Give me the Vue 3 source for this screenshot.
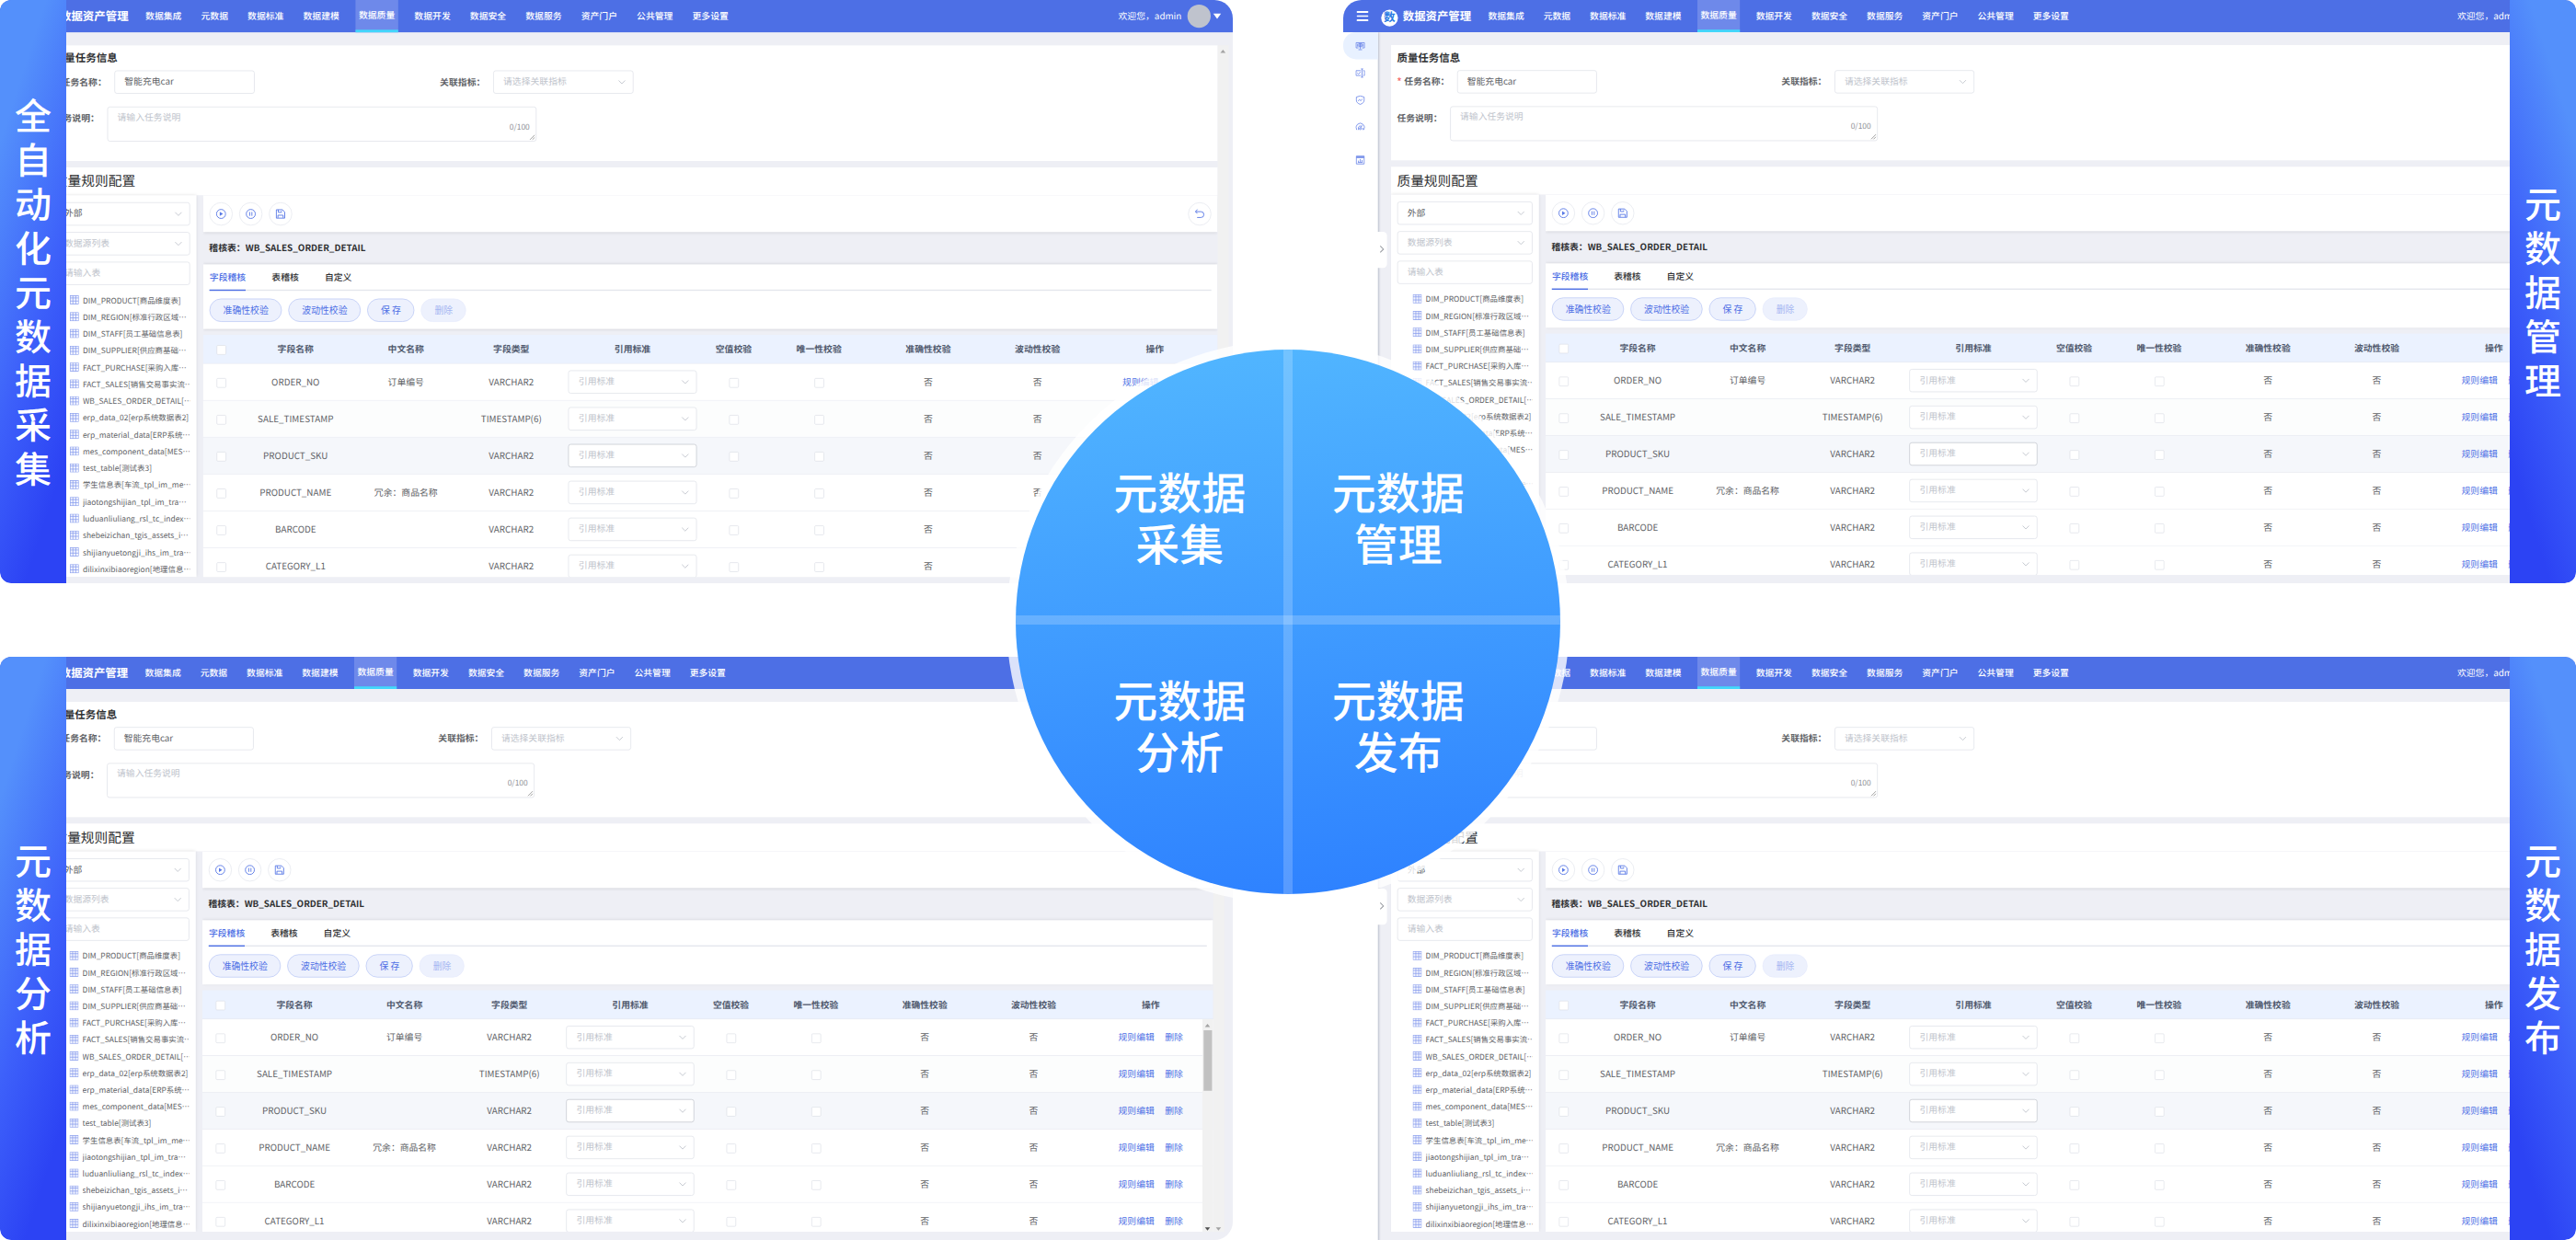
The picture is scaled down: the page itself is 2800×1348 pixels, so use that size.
<script setup>
const panels = [
  { id: 'collect', side: 'left', scale: 0.7026, banner: '全自动化元数据采集' },
  { id: 'manage', side: 'right', scale: 0.7, banner: '元数据管理' },
  { id: 'analyse', side: 'left', scale: 0.7, banner: '元数据分析' },
  { id: 'publish', side: 'right', scale: 0.7, banner: '元数据发布' },
]

const menus = [
  '数据集成', '元数据', '数据标准', '数据建模', '数据质量', '数据开发',
  '数据安全', '数据服务', '资产门户', '公共管理', '更多设置',
]
const activeMenu = '数据质量'

const tables = [
  'DIM_PRODUCT[商品维度表]',
  'DIM_REGION[标准行政区域⋯',
  'DIM_STAFF[员工基础信息表]',
  'DIM_SUPPLIER[供应商基础⋯',
  'FACT_PURCHASE[采购入库⋯',
  'FACT_SALES[销售交易事实流⋯',
  'WB_SALES_ORDER_DETAIL[⋯',
  'erp_data_02[erp系统数据表2]',
  'erp_material_data[ERP系统⋯',
  'mes_component_data[MES⋯',
  'test_table[测试表3]',
  '学生信息表[车流_tpl_im_me⋯',
  'jiaotongshijian_tpl_im_tra⋯',
  'luduanliuliang_rsl_tc_index⋯',
  'shebeizichan_tgis_assets_i⋯',
  'shijianyuetongji_ihs_im_tra⋯',
  'dilixinxibiaoregion[地理信息⋯',
]

const tabs = ['字段稽核', '表稽核', '自定义']
const columns = ['字段名称', '中文名称', '字段类型', '引用标准', '空值校验', '唯一性校验', '准确性校验', '波动性校验', '操作']
const rows = [
  { name: 'ORDER_NO', label: '订单编号', type: 'VARCHAR2' },
  { name: 'SALE_TIMESTAMP', label: '', type: 'TIMESTAMP(6)' },
  { name: 'PRODUCT_SKU', label: '', type: 'VARCHAR2' },
  { name: 'PRODUCT_NAME', label: '冗余：商品名称', type: 'VARCHAR2' },
  { name: 'BARCODE', label: '', type: 'VARCHAR2' },
  { name: 'CATEGORY_L1', label: '', type: 'VARCHAR2' },
]

const quarters = [
  ['元数据', '采集'],
  ['元数据', '管理'],
  ['元数据', '分析'],
  ['元数据', '发布'],
]
</script>

<template>
  <div class="page" lang="zh-CN">
    <section v-for="p in panels" :key="p.id" class="panel" :class="p.side">
      <div class="app" :style="{ transform: `scale(${p.scale})` }">
        <header class="nav">
          <span class="burger"><i></i><i></i><i></i></span>
          <span class="logo">数</span>
          <span class="brand">数据资产管理</span>
          <nav class="menu">
            <a v-for="m in menus" :key="m" :class="{ active: m === activeMenu }">{{ m }}</a>
          </nav>
          <span class="welcome">欢迎您，admin</span>
          <span class="avatar"></span>
          <span class="caret"></span>
        </header>

        <div class="body">
          <aside class="side">
            <div class="side-item on">
              <svg viewBox="0 0 16 16"><path d="M5 11H1V2.500h14V11h-4M5.500 4h5v5h-5zM8 4v9M5 14h6M3.200 4.500V9M12.800 4.500V9M5.500 6.500h5" /></svg>
            </div>
            <div class="side-item">
              <svg viewBox="0 0 16 16"><path d="M9 4H1v8h8M3 7.500l2 2L8.500 6M11 1v14M9 1h4M9 15h4M13 4h2v8h-2" /></svg>
            </div>
            <div class="side-item">
              <svg viewBox="0 0 16 16"><path d="M8 1l6.500 2v5c0 3.500-2.500 5.500-6.500 7-4-1.500-6.500-3.500-6.500-7V3zM4.500 9.500l2-2.500L9 9l2.500-3" /></svg>
            </div>
            <div class="side-item">
              <svg viewBox="0 0 16 16"><path d="M2.200 12.500a7 7 0 1 1 11.600 0M5 12.500V9a3 3 0 0 1 5-2.200M12 9v3.500M8.500 9.500L11 5" /><circle cx="8" cy="10.500" r="1.500" /></svg>
            </div>
            <div class="side-item last">
              <svg viewBox="0 0 16 16"><path d="M1.500 1.500h13v13h-13zM1.500 4.200h13M1.500 2.800h13M5 12V9M8 12V6.500M11 12V8M4 12h8" /></svg>
            </div>
            <div class="fold"><svg viewBox="0 0 10 16"><path d="M2.500 3l5 5-5 5" /></svg></div>
          </aside>

          <main class="main">
            <div class="content">
              <section class="card info">
                <h3>质量任务信息</h3>
                <div class="form-row">
                  <div class="field first">
                    <label><em>*</em>任务名称：</label>
                    <div class="input w217">智能充电car</div>
                  </div>
                  <div class="field">
                    <label>关联指标：</label>
                    <div class="input w217 empty">请选择关联指标
                      <svg class="chev" viewBox="0 0 14 14"><path d="M2 4.500l5 5 5-5" /></svg>
                    </div>
                  </div>
                </div>
                <div class="form-row second">
                  <label>任务说明：</label>
                  <div class="textarea">
                    <span>请输入任务说明</span>
                    <small>0/100</small>
                    <svg class="grip" viewBox="0 0 12 12"><path d="M1 11L11 1M6 11l5-5" /></svg>
                  </div>
                </div>
              </section>

              <section class="config">
                <h2>质量规则配置</h2>
                <div class="split">
                  <div class="tree">
                    <div class="input">外部
                      <svg class="chev" viewBox="0 0 14 14"><path d="M2 4.500l5 5 5-5" /></svg>
                    </div>
                    <div class="input empty">数据源列表
                      <svg class="chev" viewBox="0 0 14 14"><path d="M2 4.500l5 5 5-5" /></svg>
                    </div>
                    <div class="input empty">请输入表</div>
                    <ul>
                      <li v-for="t in tables" :key="t">
                        <svg viewBox="0 0 14 14"><rect x=".5" y=".5" width="13" height="13" /><path d="M.5 4h13M.5 8.800h13M4.800.5v13M9.200.5v13" /></svg>
                        <span>{{ t }}</span>
                      </li>
                    </ul>
                  </div>

                  <div class="work">
                    <div class="tools">
                      <span class="round"><svg viewBox="0 0 16 16"><circle cx="8" cy="8" r="7" /><path class="fill" d="M6 4.800v6.400L11 8z" /></svg></span>
                      <span class="round"><svg viewBox="0 0 16 16"><circle cx="8" cy="8" r="7" /><path d="M6.300 5v6M9.700 5v6" /></svg></span>
                      <span class="round"><svg viewBox="0 0 16 16"><path d="M1.500 1.500h9.500l3.500 3.500v9.500h-13zM4.500 1.500v4h5v-2M4 14v-4h8v4" /></svg></span>
                      <span class="round back"><svg viewBox="0 0 16 16"><path d="M4.500 1L1.500 4.500l3 3M1.500 4.500H10a4.500 4.500 0 0 1 0 9H4" /></svg></span>
                    </div>
                    <div class="strip">稽核表：WB_SALES_ORDER_DETAIL</div>
                    <div class="tabcard">
                      <div class="tabs">
                        <span v-for="(t, i) in tabs" :key="t" :class="{ active: i === 0 }">{{ t }}</span>
                      </div>
                      <div class="buttons">
                        <button>准确性校验</button>
                        <button>波动性校验</button>
                        <button>保 存</button>
                        <button disabled>删除</button>
                      </div>
                    </div>
                    <div class="table">
                      <div class="tr head">
                        <span><i class="check"></i></span>
                        <span v-for="c in columns" :key="c">{{ c }}</span>
                      </div>
                      <div v-for="r in rows" :key="r.name" class="tr" :class="{ hover: r.name === 'PRODUCT_SKU' }">
                        <span><i class="check"></i></span>
                        <span>{{ r.name }}</span>
                        <span>{{ r.label }}</span>
                        <span>{{ r.type }}</span>
                        <span class="pick">
                          <div class="input empty">引用标准
                            <svg class="chev" viewBox="0 0 14 14"><path d="M2 4.500l5 5 5-5" /></svg>
                          </div>
                        </span>
                        <span><i class="check"></i></span>
                        <span><i class="check"></i></span>
                        <span>否</span>
                        <span>否</span>
                        <span class="ops"><a>规则编辑</a><a>删除</a></span>
                      </div>
                      <div class="inner-bar"><i class="up"></i><b></b><i class="down"></i></div>
                    </div>
                  </div>
                </div>
              </section>
            </div>
            <div class="outer-bar"><i class="up"></i><i class="down"></i></div>
          </main>
        </div>
      </div>
      <div class="banner"><span v-for="(ch, i) in p.banner" :key="i">{{ ch }}</span></div>
    </section>

    <div class="halo">
      <div class="disc">
        <div v-for="(q, i) in quarters" :key="i" class="quarter">
          <span v-for="line in q" :key="line">{{ line }}</span>
        </div>
        <i class="bar-h"></i>
        <i class="bar-v"></i>
      </div>
    </div>
  </div>
</template>

<style>
body { background: #fff; }
</style>

<style scoped>
* { box-sizing: border-box; }
.page {
  position: relative;
  width: 2800px;
  height: 1348px;
  overflow: hidden;
  display: grid;
  grid-template-columns: 1340px 1340px;
  grid-template-rows: 634px 634px;
  gap: 80px 120px;
  font-family: "Noto Sans CJK SC", sans-serif;
  text-rendering: geometricPrecision;
  background: #fff;
}
.panel { position: relative; overflow: hidden; }
.panel.left { border-radius: 12px 20px 20px 12px; }
.panel.right { border-radius: 20px 12px 12px 20px; }

.app {
  width: 1920px;
  height: 910px;
  transform-origin: 0 0;
  font-size: 14px;
  line-height: 20px;
  color: #606266;
  background: #eeeff5;
  white-space: nowrap;
}

/* top navigation */
.nav {
  display: flex;
  align-items: center;
  height: 50px;
  color: #fff;
  background: #4d6fe5;
}
.burger {
  display: flex;
  flex-direction: column;
  gap: 4px;
  width: 18px;
  margin-left: 20.5px;
}
.burger i { height: 2.600px; background: #fff; border-radius: 1px; }
.logo {
  width: 26px;
  height: 26px;
  margin: 5px 0 0 20.500px;
  border-radius: 50%;
  background: #fff;
  color: #2b7be4;
  font-size: 18px;
  font-weight: 700;
  line-height: 23px;
  text-align: center;
}
.brand { width: 125px; margin-left: 7.500px; font-size: 17.700px; font-weight: 700; }
.menu { display: flex; height: 50px; }
.menu a {
  height: 50px;
  margin-right: 20px;
  padding: 0 5px;
  line-height: 51px;
  font-weight: 500;
}
.menu a:first-child { margin-left: 2.500px; }
.menu a.active {
  line-height: 47px;
  background: #6e89ea;
  border-bottom: 4px solid #43d7fb;
}
.welcome { width: 107px; margin-left: auto; }
.avatar { width: 36px; height: 36px; border-radius: 50%; background: #bfc3cd; }
.caret {
  margin: 0 31px 0 4px;
  border: 6.500px solid transparent;
  border-top: 8px solid #fff;
  border-bottom: 0;
}

/* left rail */
.body { display: flex; height: 860px; }
.side {
  position: relative;
  z-index: 1;
  width: 53.500px;
  background: #fff;
  box-shadow: 1px 0 5px rgba(0, 21, 61, .6);
  clip-path: inset(0 -20px 0 0);
}
.side-item {
  display: flex;
  align-items: center;
  justify-content: center;
  height: 42px;
}
.side-item.on { background: #e8f1ff; border-radius: 20px 0 0 20px; }
.side-item.last { margin-top: 9px; }
.side-item svg { width: 15px; height: 15px; fill: none; stroke: #6c87e9; stroke-width: 1.300; }
.fold {
  position: absolute;
  top: 310px;
  left: 52px;
  width: 16px;
  height: 56px;
  padding: 19px 0 0 3px;
  background: #fff;
  border-radius: 0 6px 6px 0;
}
.fold svg { display: block; width: 10px; height: 16px; fill: none; stroke: #9a9da3; stroke-width: 1.500; }

/* content */
.main { display: flex; padding: 20px 0 0 20px; }
.content { width: 1810px; height: 823px; overflow: hidden; }
.outer-bar { position: relative; width: 17px; height: 823px; background: #f1f1f1; }
.up, .down {
  position: absolute;
  left: 4px;
  border: 4.500px solid transparent;
}
.up { top: 7px; border-top: 0; border-bottom: 5px solid #a3a3a3; }
.down { bottom: 2px; border-bottom: 0; border-top: 5px solid #a3a3a3; }

.card { background: #fff; }
.info { height: 179px; padding-left: 10px; }
h3 { height: 39px; margin: 0; font-size: 16.380px; font-weight: 700; line-height: 39.5px; color: #303133; }
.form-row { display: flex; align-items: center; height: 36px; }
.field { display: flex; align-items: center; }
.field.first { width: 597px; }
label { width: 82px; font-weight: 700; color: #606266; }
.field.first label { width: 93px; }
label em { display: inline-block; width: 11.300px; color: #f56c6c; font-style: normal; }
.input {
  position: relative;
  height: 36px;
  padding-left: 15px;
  border: 1.400px solid #dcdfe6;
  border-radius: 4px;
  background: #fff;
  line-height: 32.5px;
  color: #606266;
}
.input.empty { color: #c0c4cc; }
.w217 { width: 217px; }
.chev {
  position: absolute;
  top: 10px;
  right: 10px;
  width: 14px;
  height: 14px;
  fill: none;
  stroke: #c0c4cc;
  stroke-width: 1.300;
}
.form-row.second { align-items: flex-start; height: 54px; margin-top: 20px; }
.second label { line-height: 36px; }
.textarea {
  position: relative;
  display: flex;
  width: 664px;
  height: 54px;
  padding: 4.500px 9px 0 15px;
  justify-content: space-between;
  border: 1.400px solid #dcdfe6;
  border-radius: 4px;
  color: #c0c4cc;
}
.textarea small { margin-top: 15px; font-size: 12px; color: #909399; }
.grip { position: absolute; right: 1px; bottom: 1px; width: 9px; height: 9px; fill: none; stroke: #777; stroke-width: 1.300; }

.config { height: 634.500px; margin-top: 9.500px; }
h2 { height: 43px; margin: 0; padding-left: 10px; background: #fff; font-size: 21px; font-weight: 400; line-height: 43px; color: #303133; }
.split { display: flex; gap: 10px; height: 591px; }
.tree {
  position: relative;
  width: 230px;
  padding: 11px 10px 0;
  background: #fff;
  box-shadow: 0 0 5px rgba(0, 0, 0, .13);
}
.tree .input { margin-bottom: 10px; }
.tree ul { margin: 11px 0 0; padding: 0; list-style: none; }
.tree li { display: flex; align-items: center; height: 26px; padding-left: 24.500px; font-size: 12px; }
.tree li span { width: 168px; margin-left: 6px; overflow: hidden; }
.tree li svg { flex: none; width: 14px; height: 14px; margin-bottom: 2px; fill: #f3f5fe; stroke: #8197ec; stroke-width: 1; }

.work { width: 1570px; overflow: hidden; }
.tools {
  position: relative;
  display: flex;
  gap: 10px;
  height: 57px;
  padding: 11px 10px 0;
  background: #fff;
  box-shadow: 0 2px 5px rgba(0, 0, 0, .1);
}
.round {
  display: flex;
  align-items: center;
  justify-content: center;
  width: 36px;
  height: 36px;
  border: 1.400px solid #e2e5ec;
  border-radius: 50%;
}
.round svg { width: 16px; height: 16px; fill: none; stroke: #5777e6; stroke-width: 1.300; }
.round .fill { fill: #5777e6; stroke: none; }
.back { margin-left: auto; }
.strip { height: 50px; padding-left: 10px; font-weight: 700; line-height: 51px; color: #303133; }
.tabcard {
  position: relative;
  height: 100px;
  padding: 0 10px 0 10.800px;
  background: #fff;
  box-shadow: 0 0 5px rgba(0, 0, 0, .13);
}
.tabs { display: flex; gap: 40px; height: 41px; border-bottom: 2px solid #e4e7ed; }
.tabs span { height: 41px; line-height: 41px; font-weight: 500; color: #303133; }
.tabs .active { color: #4d6fe5; border-bottom: 2px solid #4d6fe5; }
.buttons { display: flex; gap: 10px; margin-top: 12.500px; }
button {
  height: 36px;
  padding: 0 20px;
  border: 1.400px solid #b8c5f5;
  border-radius: 18px;
  background: #edf1fd;
  color: #4d6fe5;
  font: 400 14px/32px "Noto Sans CJK SC", sans-serif;
}
button:disabled { border-color: #e6ebfc; color: #a6b7f2; }

.table { position: relative; margin-top: 9.500px; }
.tr {
  display: grid;
  grid-template-columns: 58px 171.500px 170px 156px 219px 94px 170px 168px 170px 193.500px;
  align-items: center;
  height: 57px;
  border-bottom: 1.400px solid #e6e9f0;
  background: #fff;
  text-align: center;
}
.tr.head { height: 45px; background: #ebf2ff; font-weight: 700; color: #515a6e; }
.tr:nth-child(3) { background: #fcfdfd; }
.tr.hover { background: #f5f7fb; }
.tr.hover .input { border-color: #c0c4cc; }
.pick { padding: 0 10px; text-align: left; }
.check {
  display: inline-block;
  width: 15px;
  height: 15px;
  border: 1.400px solid #dcdfe6;
  border-radius: 2px;
  background: #fff;
  vertical-align: -3.500px;
}
.ops a { color: #4d6fe5; }
.ops a + a { margin-left: 16.500px; }
.inner-bar {
  position: absolute;
  top: 45px;
  right: 0;
  width: 17px;
  height: 330px;
  background: #f1f1f1;
}
.inner-bar b { position: absolute; top: 17px; left: 2px; width: 13px; height: 94px; background: #c1c1c1; }
.inner-bar .down { border-top-color: #505050; }

/* side banners */
.banner {
  position: absolute;
  top: 0;
  width: 72px;
  height: 634px;
  padding-bottom: 3px;
  display: flex;
  flex-direction: column;
  justify-content: center;
  align-items: center;
  color: #fff;
  font-size: 40px;
  font-weight: 500;
  line-height: 48px;
}
.left .banner {
  left: 0;
  border-radius: 12px 0 0 12px;
  background: linear-gradient(108deg, #5490fb 18%, #3d60fa 55%, #2c43f4 84%);
}
.right .banner {
  right: 0;
  border-radius: 0 12px 12px 0;
  background: linear-gradient(252deg, #5490fb 18%, #3d60fa 55%, #2c43f4 84%);
}

/* centre disc, laid over the four panels */
.halo {
  position: absolute;
  top: 370px;
  left: 1094px;
  width: 612px;
  height: 612px;
  padding: 10px;
  border-radius: 50%;
  background: rgba(255, 255, 255, .8);
}
.disc {
  position: relative;
  display: grid;
  grid-template-columns: 237.5px 237.5px;
  grid-template-rows: 226px 226px;
  justify-content: center;
  padding: 68px 0 0 2px;
  width: 592px;
  height: 592px;
  overflow: hidden;
  border-radius: 50%;
  background: linear-gradient(175deg, #52b7ff, #2d80ff);
}
.quarter {
  display: flex;
  flex-direction: column;
  justify-content: center;
  align-items: center;
  color: #fff;
  font-size: 48px;
  font-weight: 500;
  line-height: 56px;
}
.bar-h, .bar-v { position: absolute; background: rgba(255, 255, 255, .2); }
.bar-h { top: 289px; left: 0; width: 592px; height: 10px; }
.bar-v { top: 0; left: 291px; width: 10px; height: 592px; }
</style>
